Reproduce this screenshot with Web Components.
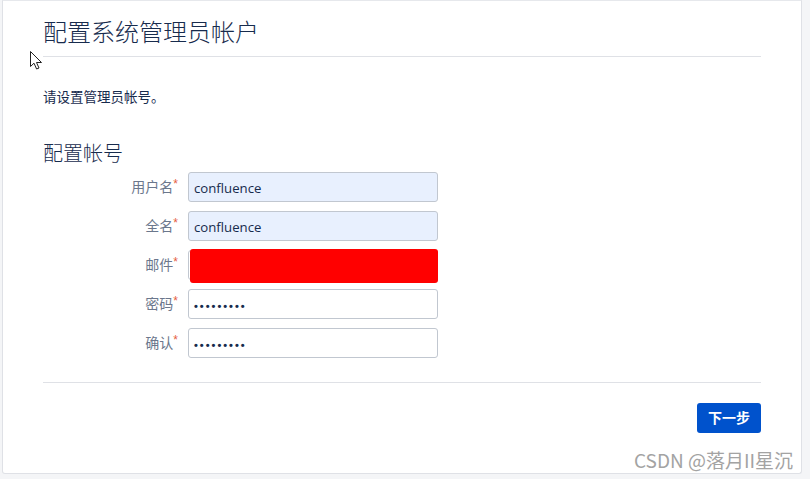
<!DOCTYPE html>
<html lang="zh"><head><meta charset="utf-8">
<style>
html,body{margin:0;padding:0;height:100%;overflow:hidden;background:#f4f5f7}
body{font-family:"Open Sans","Noto Sans CJK SC",sans-serif;color:#172b4d}
</style></head><body>
<setup-page>
  <form-row label="用户名" value="confluence" filled></form-row>
  <form-row label="全名" value="confluence" filled></form-row>
  <form-row label="邮件" redacted></form-row>
  <form-row label="密码" dots="•••••••••"></form-row>
  <form-row label="确认" dots="•••••••••"></form-row>
</setup-page>
<script>
class SetupPage extends HTMLElement{
  constructor(){super();this.attachShadow({mode:'open'}).innerHTML=`
<style>
:host{display:block;width:810px;height:479px;position:relative;box-sizing:border-box;padding:0 8px 5px 2px;
 font-family:"Open Sans","Noto Sans CJK SC",sans-serif;color:#172b4d}
.card{height:100%;box-sizing:border-box;background:#fff;border:1px solid #dfe1e6;border-top:1px solid #e6e8ec;border-radius:0 0 3px 3px;padding:0 40px;display:flex;flex-direction:column}
h1{margin:0;font:300 24px/30px "Noto Sans CJK SC",sans-serif;padding:15px 0 10px;border-bottom:1px solid #dfe1e6;color:#172b4d}
p{margin:0;padding-top:29px;font:400 13.5px/20px "Noto Sans CJK SC",sans-serif}
h2{margin:0;padding-top:33px;font:300 20px/28px "Noto Sans CJK SC",sans-serif;color:#172b4d}
.rows{display:flex;flex-direction:column;gap:9px;padding-top:5px}
.foot{margin-top:24px;border-top:1px solid #dfe1e6;padding-top:20px;display:flex;justify-content:flex-end}
button{width:64px;height:30px;border:0;border-radius:3px;background:#0052cc;color:#fff;font:700 14px/28px "Noto Sans CJK SC",sans-serif;padding:0 0 2px}
.cursor{position:absolute;left:30px;top:51px}
.mark{position:absolute;left:634px;top:447px;font:400 19px/26px "Noto Sans CJK SC",sans-serif;color:#a3a3a3;white-space:nowrap}
</style>
<div class="card">
 <h1>配置系统管理员帐户</h1>
 <p>请设置管理员帐号。</p>
 <h2>配置帐号</h2>
 <div class="rows"><slot></slot></div>
 <div class="foot"><button type="button">下一步</button></div>
</div>
<svg class="cursor" width="13" height="19" viewBox="0 0 13 19"><path d="M.5.5V15.5L4 12.2 6.6 18 9 17 6.5 11.5H11.5Z" fill="#fff" stroke="#222" stroke-width="1"/></svg>
<div class="mark">CSDN @落月II星沉</div>`;}
}
class FormRow extends HTMLElement{
  constructor(){super();this.attachShadow({mode:'open'});}
  connectedCallback(){
    const a=n=>this.getAttribute(n);
    const val=a('dots')?`<span class="dots">${a('dots')}</span>`:(a('value')||'');
    this.shadowRoot.innerHTML=`
<style>
:host{display:flex;height:30px;align-items:center;font-family:"Open Sans","Noto Sans CJK SC",sans-serif}
.lab{width:135px;margin-right:10px;text-align:right;font:400 14px/20px "Noto Sans CJK SC",sans-serif;color:#6b778c;white-space:nowrap;position:relative;top:-1px}
.lab i{font:400 12px/12px "Liberation Sans",sans-serif;color:#e5603f;position:relative;top:-4px;font-style:normal}
.box{position:relative;box-sizing:border-box;width:250px;height:30px;border:1px solid #c1c7d0;border-radius:3px;padding:1px 5px 0;font:400 13.2px/28px "Open Sans","Noto Sans CJK SC",sans-serif;color:#172b4d;background:#fff}
:host([filled]) .box{background:#e8f0fe}
.dots{font:700 11px/26px "Liberation Sans",sans-serif;letter-spacing:2px}
.red{position:absolute;left:1px;right:-1px;top:-2px;bottom:-4px;background:#f00;border-radius:3px}
</style>
<div class="lab">${a('label')}<i>*</i></div>
<div class="box">${val}${this.hasAttribute('redacted')?'<div class="red"></div>':''}</div>`;
  }
}
customElements.define('setup-page',SetupPage);
customElements.define('form-row',FormRow);
</script>
</body></html>
